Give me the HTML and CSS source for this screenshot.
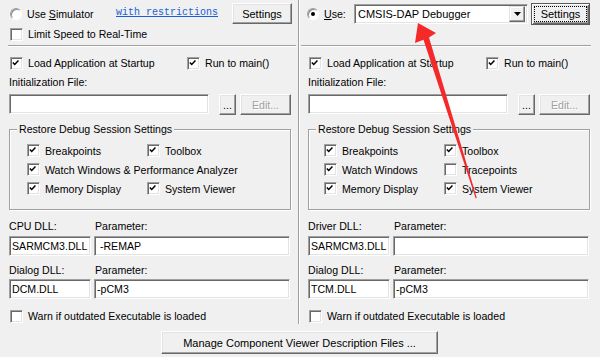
FILE: index.html
```html
<!DOCTYPE html>
<html lang="en">
<head>
<meta charset="utf-8">
<title>Debug</title>
<link rel="stylesheet" href="styles.css">
</head>
<body>
<div class="dialog">
  <div class="panes">
    <section class="pane pane-left">
      <div class="row row-top">
        <label class="opt opt-sim"><span class="radio"></span><span>Use <u>S</u>imulator</span></label>
        <a class="link">with restrictions</a>
        <button class="btn btn-settings">Settings</button>
      </div>
      <div class="row row-limit">
        <label class="opt"><span class="cb"></span><span>Limit Speed to Real-Time</span></label>
      </div>
      <div class="sep"></div>
      <div class="row row-load">
        <label class="opt opt-load"><span class="cb"><svg viewBox="0 0 13 13"><path d="M3.2 6.3 L5.4 8.6 L9.8 4"/></svg></span><span>Load Application at Startup</span></label>
        <label class="opt"><span class="cb"><svg viewBox="0 0 13 13"><path d="M3.2 6.3 L5.4 8.6 L9.8 4"/></svg></span><span>Run to main()</span></label>
      </div>
      <div class="lbl">Initialization File:</div>
      <div class="file-row">
        <div class="edit file"></div>
        <button class="btn btn-dots">...</button>
        <button class="btn btn-edit">Edit...</button>
      </div>
      <fieldset class="group">
        <legend>Restore Debug Session Settings</legend>
        <div class="group-grid">
          <label class="opt"><span class="cb"><svg viewBox="0 0 13 13"><path d="M3.2 6.3 L5.4 8.6 L9.8 4"/></svg></span><span>Breakpoints</span></label>
          <label class="opt"><span class="cb"><svg viewBox="0 0 13 13"><path d="M3.2 6.3 L5.4 8.6 L9.8 4"/></svg></span><span>Toolbox</span></label>
          <label class="opt span2"><span class="cb"><svg viewBox="0 0 13 13"><path d="M3.2 6.3 L5.4 8.6 L9.8 4"/></svg></span><span>Watch Windows &amp; Performance Analyzer</span></label>
          <label class="opt"><span class="cb"><svg viewBox="0 0 13 13"><path d="M3.2 6.3 L5.4 8.6 L9.8 4"/></svg></span><span>Memory Display</span></label>
          <label class="opt"><span class="cb"><svg viewBox="0 0 13 13"><path d="M3.2 6.3 L5.4 8.6 L9.8 4"/></svg></span><span>System Viewer</span></label>
        </div>
      </fieldset>
      <div class="dll-labels first"><span class="dl">CPU DLL:</span><span>Parameter:</span></div>
      <div class="dll-row"><div class="edit dll">SARMCM3.DLL</div><div class="edit param"> -REMAP</div></div>
      <div class="dll-labels"><span class="dl">Dialog DLL:</span><span>Parameter:</span></div>
      <div class="dll-row"><div class="edit dll">DCM.DLL</div><div class="edit param">-pCM3</div></div>
      <div class="row row-warn">
        <label class="opt"><span class="cb"></span><span>Warn if outdated Executable is loaded</span></label>
      </div>
    </section>
    <div class="divider"></div>
    <section class="pane pane-right">
      <div class="row row-top">
        <label class="opt opt-use"><span class="radio on"></span><span><u>U</u>se:</span></label>
        <div class="select"><span class="select-text">CMSIS-DAP Debugger</span><span class="drop"><svg viewBox="0 0 7 4"><path d="M0 0 H7 L3.5 4 Z"/></svg></span></div>
        <button class="btn btn-settings btn-default"><span class="focus">Settings</span></button>
      </div>
      <div class="sep"></div>
      <div class="row row-load">
        <label class="opt opt-load"><span class="cb"><svg viewBox="0 0 13 13"><path d="M3.2 6.3 L5.4 8.6 L9.8 4"/></svg></span><span>Load Application at Startup</span></label>
        <label class="opt"><span class="cb"><svg viewBox="0 0 13 13"><path d="M3.2 6.3 L5.4 8.6 L9.8 4"/></svg></span><span>Run to main()</span></label>
      </div>
      <div class="lbl">Initialization File:</div>
      <div class="file-row">
        <div class="edit file"></div>
        <button class="btn btn-dots">...</button>
        <button class="btn btn-edit">Edit...</button>
      </div>
      <fieldset class="group">
        <legend>Restore Debug Session Settings</legend>
        <div class="group-grid">
          <label class="opt"><span class="cb"><svg viewBox="0 0 13 13"><path d="M3.2 6.3 L5.4 8.6 L9.8 4"/></svg></span><span>Breakpoints</span></label>
          <label class="opt"><span class="cb"><svg viewBox="0 0 13 13"><path d="M3.2 6.3 L5.4 8.6 L9.8 4"/></svg></span><span>Toolbox</span></label>
          <label class="opt"><span class="cb"><svg viewBox="0 0 13 13"><path d="M3.2 6.3 L5.4 8.6 L9.8 4"/></svg></span><span>Watch Windows</span></label>
          <label class="opt"><span class="cb"></span><span>Tracepoints</span></label>
          <label class="opt"><span class="cb"><svg viewBox="0 0 13 13"><path d="M3.2 6.3 L5.4 8.6 L9.8 4"/></svg></span><span>Memory Display</span></label>
          <label class="opt"><span class="cb"><svg viewBox="0 0 13 13"><path d="M3.2 6.3 L5.4 8.6 L9.8 4"/></svg></span><span>System Viewer</span></label>
        </div>
      </fieldset>
      <div class="dll-labels first"><span class="dl">Driver DLL:</span><span>Parameter:</span></div>
      <div class="dll-row"><div class="edit dll">SARMCM3.DLL</div><div class="edit param"></div></div>
      <div class="dll-labels"><span class="dl">Dialog DLL:</span><span>Parameter:</span></div>
      <div class="dll-row"><div class="edit dll">TCM.DLL</div><div class="edit param">-pCM3</div></div>
      <div class="row row-warn">
        <label class="opt"><span class="cb"></span><span>Warn if outdated Executable is loaded</span></label>
      </div>
    </section>
  </div>
  <div class="bottom">
    <button class="btn btn-manage">Manage Component Viewer Description Files ...</button>
  </div>
  <svg class="arrow" viewBox="0 0 600 357" width="600" height="357">
    <polygon points="418,23 436,33 429,37.5 476.8,198 475.6,198.3 423.5,39.8 415,43" />
  </svg>
</div>
</body>
</html>
```

FILE: styles.css
```css
* { box-sizing: border-box; }
html, body { margin: 0; padding: 0; }
body {
  width: 600px;
  height: 357px;
  overflow: hidden;
  background: #f0f0f0;
  font-family: "Liberation Sans", Arial, sans-serif;
  font-size: 10.6px;
  color: #000;
}
.dialog { position: relative; width: 600px; height: 357px; }
.panes { display: flex; height: 325px; }
.pane { display: flex; flex-direction: column; }
.pane-left { width: 298px; padding-left: 9px; }
.pane-right { width: 300px; padding-left: 8px; }
.divider {
  width: 2px;
  height: 324px;
  border-left: 1px solid #a0a0a0;
  background: #fff;
}

.row { display: flex; align-items: center; }
.opt { display: flex; align-items: center; gap: 5px; white-space: nowrap; flex: none; }
u { text-decoration: underline; text-underline-offset: 1px; }

/* radio + checkbox */
.radio {
  width: 12px; height: 12px; border-radius: 50%;
  background: #fff;
  border: 1px solid;
  border-color: #a0a0a0 #fff #fff #a0a0a0;
  box-shadow: inset 1px 1px 0 #8a8a8a;
  position: relative;
  flex: none;
}
.radio.on::after {
  content: "";
  position: absolute;
  left: 3px; top: 3px;
  width: 4px; height: 4px;
  border-radius: 50%;
  background: #000;
}
.cb {
  width: 13px; height: 13px;
  margin-left: 1px;
  background: #fff;
  border: 1px solid;
  border-color: #a0a0a0 #fff #fff #a0a0a0;
  box-shadow: inset 1px 1px 0 #696969, inset -1px -1px 0 #e3e3e3;
  flex: none;
  display: block;
}
.cb svg { display: block; width: 11px; height: 11px; margin: 0; }
.cb svg path { fill: none; stroke: #000; stroke-width: 1.8; transform: translate(-1px, -1px); }

/* buttons */
.btn {
  font: inherit;
  color: #000;
  background: #f0f0f0;
  border: 1px solid;
  border-color: #fff #696969 #696969 #fff;
  box-shadow: inset -1px -1px 0 #a0a0a0, inset 1px 1px 0 #e3e3e3;
  padding: 0;
  margin: 0;
  display: flex;
  align-items: center;
  justify-content: center;
  flex: none;
}
.btn-settings { width: 60px; height: 21px; margin-left: auto; margin-right: 6px; font-size: 11px; }
.btn-default {
  width: 59px; height: 22px;
  margin-left: 3px; margin-right: 0;
  align-self: flex-start;
  border: 1px solid #5a5a5a;
  box-shadow: inset 1px 1px 0 #fff, inset -1px -1px 0 #696969, inset 2px 2px 0 #e3e3e3, inset -2px -2px 0 #a0a0a0;
}
.focus {
  border: 1px dotted #000;
  width: 53px; height: 16px;
  display: flex; align-items: center; justify-content: center;
}

/* edits */
.edit {
  height: 20px;
  background: #fff;
  border: 1px solid;
  border-color: #a0a0a0 #fff #fff #a0a0a0;
  box-shadow: inset 1px 1px 0 #696969, inset -1px -1px 0 #e3e3e3;
  padding-left: 2px;
  line-height: 18px;
  white-space: pre;
  flex: none;
}

/* top row */
.row-top { height: 21px; margin-top: 3px; }
.opt-sim .radio { margin-left: 1px; }
.opt-sim { width: 107px; }
.link {
  font-family: "Liberation Mono", "Courier New", monospace;
  font-size: 10px;
  color: #1a5fd6;
  text-decoration: underline;
  margin-top: -2px;
}
.opt-use { width: 46px; }
.opt-use .radio { margin-left: -1px; }
.select {
  width: 174px; height: 20px;
  align-self: flex-start;
  margin-top: 1px;
  background: #fff;
  border: 1px solid;
  border-color: #a0a0a0 #fff #fff #a0a0a0;
  box-shadow: inset 1px 1px 0 #696969, inset -1px -1px 0 #e3e3e3;
  display: flex;
  align-items: center;
  padding: 2px 2px 2px 3px;
  font-size: 11px;
}
.select-text { flex: 1; }
.drop {
  width: 16px; height: 16px;
  background: #f0f0f0;
  border: 1px solid;
  border-color: #e3e3e3 #696969 #696969 #e3e3e3;
  box-shadow: inset -1px -1px 0 #a0a0a0, inset 1px 1px 0 #fff;
  display: flex; align-items: center; justify-content: center;
}
.drop svg { width: 7px; height: 4px; display: block; }
.drop svg path { fill: #000; }

.row-limit { height: 18px; margin-top: 1px; }

.sep {
  height: 2px;
  border-top: 1px solid #a0a0a0;
  border-bottom: 1px solid #fff;
}
.pane-left .sep { margin-top: 2px; margin-left: -1px; width: 288px; }
.pane-right .sep { margin-top: 21px; margin-left: -7px; width: 290px; }

.row-load { height: 18px; margin-top: 7px; }
.opt-load { width: 177px; }

.lbl { height: 14px; line-height: 14px; margin-top: 3px; }

.file-row { display: flex; margin-top: 5px; height: 20px; }
.file { width: 200px; }
.btn-dots { width: 17px; height: 21px; margin-left: 10px; }
.btn-edit { width: 51px; height: 21px; margin-left: 4px; color: #a0a0a0; text-shadow: 1px 1px 0 #fff; }

/* group box */
.group {
  margin: 9px 0 0 0;
  padding: 6px 0 11px 0;
  width: 282px;
  min-inline-size: 0;
  border: 1px solid #a0a0a0;
  box-shadow: 1px 1px 0 #fff, inset 1px 1px 0 #fff;
}
.group legend {
  margin-left: 7px;
  padding: 0 2px;
  line-height: 12px;
  height: 12px;
  background: #f0f0f0;
}
.group-grid {
  display: grid;
  grid-template-columns: 120px auto;
  grid-auto-rows: 19px;
  align-items: center;
  padding-left: 16px;
}
.pane-right .group-grid { padding-left: 14px; }
.span2 { grid-column: 1 / 3; }

/* dll */
.dll-labels { display: flex; height: 14px; line-height: 14px; margin-top: 7px; }
.dll-labels.first { margin-top: 9px; }
.dl { width: 86px; }
.dll-row { display: flex; height: 20px; margin-top: 2px; }
.dll-labels.first + .dll-row { margin-top: 3px; }
.dll { width: 82px; }
.param { width: 196px; margin-left: 3px; }

.row-warn { height: 18px; margin-top: 8px; }

/* bottom */
.bottom { display: flex; padding-left: 161px; margin-top: 6px; }
.btn-manage { width: 277px; height: 23px; font-size: 11px; }

/* overlay arrow */
.arrow { position: absolute; left: 0; top: 0; pointer-events: none; }
.arrow polygon { fill: #f42a2a; }
```
